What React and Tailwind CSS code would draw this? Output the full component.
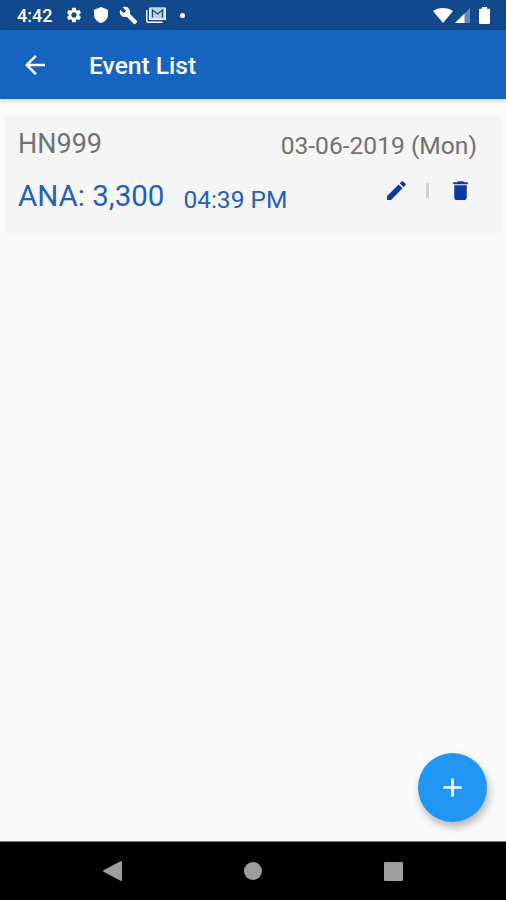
import { MdAdd, MdArrowBack, MdBuild, MdDelete, MdEdit, MdSettings } from "react-icons/md";

const events = [
  { id: 1, code: "HN999", date: "03-06-2019 (Mon)", result: "ANA: 3,300", time: "04:39 PM" },
];

function StatusBar() {
  return (
    <div className="h-[30px] shrink-0 bg-[#11498c] text-white flex items-center justify-between pl-[17px] pr-[16px]">
      <div className="flex items-center h-full">
        <span className="w-[48px] text-[18px] leading-[30px] font-medium pt-[2px]">4:42</span>
        <MdSettings className="w-[18px] h-[18px]" />
        <svg className="w-[14px] h-[16px] ml-[11px]" viewBox="0 0 13 15" fill="currentColor">
          <path d="M6.5 0L13 2.5V7c0 3.8-2.7 6.9-6.5 8C2.7 13.9 0 10.8 0 7V2.5z" />
        </svg>
        <MdBuild className="w-[19px] h-[19px] ml-[11px]" />
        <svg className="w-[20px] h-[16px] ml-[8px]" viewBox="0 0 20 16" fill="none" stroke="currentColor">
          <path d="M.8 3v11q0 1.2 1.2 1.2h14.5" strokeWidth="1.4" />
          <rect x="3.2" y=".2" width="16.6" height="12.8" rx="1" fill="currentColor" fillOpacity=".75" stroke="none" />
          <path d="M3.8 1v11.4h15.4V1" strokeWidth="1.2" />
          <path d="M6.5 10.5V3l5 4 5-4v7.5" stroke="#11498c" strokeWidth="1.3" />
        </svg>
        <span className="w-[5px] h-[5px] rounded-full bg-white ml-[14px]" />
      </div>
      <div className="flex items-center">
        <svg className="w-[20px] h-[15px]" viewBox="0 0 20 15" fill="currentColor">
          <path d="M10 15L0 3C5.5-1 14.5-1 20 3z" />
        </svg>
        <svg className="w-[15px] h-[15px] ml-[2px]" viewBox="0 0 15 15" fill="currentColor">
          <path d="M0 15L15 0v15z" opacity=".35" />
          <path d="M0 15L9.5 5.5V15z" />
        </svg>
        <svg className="w-[11px] h-[17px] ml-[9px]" viewBox="0 0 11 17" fill="currentColor">
          <path d="M3 0h5v1.7h2q1 0 1 1V16q0 1-1 1H1q-1 0-1-1V2.7q0-1 1-1h2z" />
        </svg>
      </div>
    </div>
  );
}

function AppBar() {
  return (
    <header className="h-[69px] shrink-0 bg-[#1565c0] text-white flex items-center pl-[20px] shadow-[0_1px_5px_rgba(0,0,0,0.22)]">
      <button type="button" aria-label="Back">
        <MdArrowBack className="w-[30px] h-[30px]" />
      </button>
      <h1 className="ml-[39px] pt-[2px] text-[24.6px] leading-[30px] font-medium">Event List</h1>
    </header>
  );
}

function EventCard({ event }) {
  return (
    <div className="h-[117px] bg-[#f5f5f5] rounded-[3px] pl-[13px] pr-[25px] pt-[12px]">
      <div className="flex justify-between text-[#727272]">
        <span className="text-[27px] leading-[32px]">{event.code}</span>
        <span className="text-[24.6px] leading-[32px] pt-[2px]">{event.date}</span>
      </div>
      <div className="flex justify-between mt-[14px] text-[#2360ba]">
        <div className="flex gap-[19px]">
          <span className="text-[29.5px] leading-[40px]">{event.result}</span>
          <span className="text-[24.5px] leading-[40px] pt-[4px]">{event.time}</span>
        </div>
        <div className="flex items-center h-[28px] mr-[4px] text-[#0d38a0]">
          <button type="button" aria-label="Edit">
            <MdEdit className="w-[25px] h-[25px]" />
          </button>
          <span className="w-[3px] h-[15px] bg-[#cfcfcf] ml-[17px] mr-[19px]" />
          <button type="button" aria-label="Delete">
            <MdDelete className="w-[25px] h-[25px]" />
          </button>
        </div>
      </div>
    </div>
  );
}

function NavBar() {
  return (
    <nav className="h-[59px] shrink-0 bg-black border-t border-[#777] text-[#9e9e9e] flex items-center justify-between pl-[103px] pr-[103px]">
      <svg className="w-[19px] h-[20px]" viewBox="0 0 19 20" fill="currentColor">
        <path d="M18 0q1 0 1 1v18q0 1-1 1L.5 10.7q-1-.7 0-1.4z" />
      </svg>
      <span className="w-[18px] h-[18px] rounded-full bg-[#9e9e9e]" />
      <span className="w-[19px] h-[19px] rounded-[1px] bg-[#9e9e9e]" />
    </nav>
  );
}

export default function App() {
  return (
    <div className="w-[506px] h-[900px] flex flex-col overflow-hidden bg-[#fafafa] font-['Roboto',sans-serif]">
      <StatusBar />
      <AppBar />
      <main className="relative flex-1 pl-[5px] pr-[4px] pt-[17px]">
        {events.map((event) => (
          <EventCard key={event.id} event={event} />
        ))}
        <button
          type="button"
          aria-label="Add event"
          className="absolute right-[19px] bottom-[19px] w-[69px] h-[69px] rounded-full bg-[#2196f3] text-white flex items-center justify-center shadow-[2px_5px_8px_rgba(0,0,0,0.28)]"
        >
          <MdAdd className="w-[31px] h-[31px]" />
        </button>
      </main>
      <NavBar />
    </div>
  );
}
